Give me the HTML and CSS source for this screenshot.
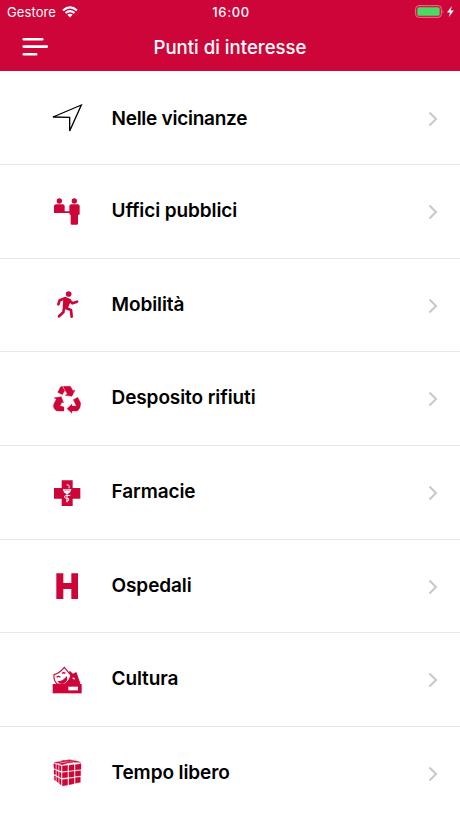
FILE: index.html
```html
<!DOCTYPE html>
<html lang="it">
  <head>
    <meta charset="utf-8">
    <title>Punti di interesse</title>
    <link rel="stylesheet" href="styles.css">
  </head>
  <body>
    <header>
      <div class="status">
        <div class="carrier">
          <span>Gestore</span>
          <svg width="16" height="12" viewBox="0 0 16 12" fill="none" stroke="#fff" stroke-width="2.1">
            <path d="M1 4.5Q8-1.6 15 4.5M3.5 7Q8 3.1 12.5 7"/>
            <path d="M5.4 8.8Q8 6.9 10.6 8.8L8 11.5z" fill="#fff" stroke="none"/>
          </svg>
        </div>
        <span class="time">16:00</span>
        <div class="power">
          <svg width="40" height="14" viewBox="0 0 40 14">
            <rect x=".7" y=".7" width="25.6" height="11.6" rx="3" fill="none" stroke="#e77d98" stroke-width="1"/>
            <rect x="2.3" y="2.3" width="22.4" height="8.4" rx="1.5" fill="#4cd964"/>
            <path d="M27.7 5q1.8 1.8 0 3.6z" fill="#e77d98"/>
            <path d="M36.8 1L32 7.4h3l-1.2 4.9 5-6.9h-3z" fill="#fff"/>
          </svg>
        </div>
      </div>
      <div class="navbar">
        <svg class="menu" width="28" height="20" viewBox="0 0 28 20" stroke="#fff" stroke-width="2.6" stroke-linecap="round">
          <path d="M2.7 2.2h18.6M2.7 9.6h23.1M2.7 17.2h12.5"/>
        </svg>
        <h1>Punti di interesse</h1>
      </div>
    </header>
    <ul class="list">
      <li class="first">
        <svg class="icon" viewBox="0 0 135 135"><path d="M109 27L24 63L74 64L74 105Z" fill="none" stroke="#000" stroke-width="4"/></svg>
        <span class="label">Nelle vicinanze</span>
        <svg class="chevron" viewBox="0 0 10 16"><path d="M1.5 1.5L8 8L1.5 14.5"/></svg>
      </li>
      <li>
        <svg class="icon" viewBox="0 0 135 135">
          <circle cx="43" cy="33" r="8"/><circle cx="88" cy="33" r="8"/>
          <path d="M27 69V49q0-6 6-6h20q6 0 6 6v15h14V49q0-6 6-6h19q6 0 6 6v22q0 4-5 4v26q0 3-4 3H81q-4 0-4-3V75q-4 0-4-6z"/>
        </svg>
        <span class="label">Uffici pubblici</span>
        <svg class="chevron" viewBox="0 0 10 16"><path d="M1.5 1.5L8 8L1.5 14.5"/></svg>
      </li>
      <li>
        <svg class="icon" viewBox="0 0 135 135">
          <circle cx="71" cy="33" r="8.5"/>
          <path d="M60 47L73 52L64 74L58 72Z" stroke="#ce0538" stroke-width="10" stroke-linejoin="round"/>
          <path d="M61 46L44 52L40 64M74 52L82 61L96 56M64 76L78 81L80 101M57 76L55 88L42 100" fill="none" stroke="#ce0538" stroke-width="8" stroke-linecap="round" stroke-linejoin="round"/>
        </svg>
        <span class="label">Mobilità</span>
        <svg class="chevron" viewBox="0 0 10 16"><path d="M1.5 1.5L8 8L1.5 14.5"/></svg>
      </li>
      <li>
        <svg class="icon recycle" viewBox="0 0 135 135">
          <path d="M55 28H76L84 41L90 39L81 58L60 55L67 51L60 40Z"/>
          <path d="M52 28L59 41L52 53L38 46L46 31Q48 28 52 28Z"/>
          <path d="M27 62L49 59L56 78L51 76L45 86L57 90V102H35Q26 97 25 88Q25 82 34 67Z"/>
          <path d="M85 68L98 61L107 78Q107 95 97 102H81V109L66 95L81 81V87H94Z"/>
        </svg>
        <span class="label">Desposito rifiuti</span>
        <svg class="chevron" viewBox="0 0 10 16"><path d="M1.5 1.5L8 8L1.5 14.5"/></svg>
      </li>
      <li>
        <svg class="icon" viewBox="0 0 135 135">
          <path d="M50 28H83V51H106V83H83V105H50V83H27V51H50Z"/>
          <path d="M54 54H79Q77 68 66 69Q55 67 54 54Z" fill="#fff"/>
          <path d="M72 52Q75 39 65 42M66 68V94M76 73Q60 72 57 77Q59 82 71 83Q75 88 64 91" fill="none" stroke="#fff" stroke-width="3"/>
          <path d="M58 57H74" stroke="#ce0538" stroke-width="2"/>
        </svg>
        <span class="label">Farmacie</span>
        <svg class="chevron" viewBox="0 0 10 16"><path d="M1.5 1.5L8 8L1.5 14.5"/></svg>
      </li>
      <li>
        <svg class="icon" viewBox="0 0 135 135"><path d="M34 28H55V57H79V28H99V105H79V75H55V105H34Z"/></svg>
        <span class="label">Ospedali</span>
        <svg class="chevron" viewBox="0 0 10 16"><path d="M1.5 1.5L8 8L1.5 14.5"/></svg>
      </li>
      <li>
        <svg class="icon" viewBox="0 0 135 135">
          <path d="M74 38L84 47L94 42L106 76L97 84H60L66 66Z"/>
          <path d="M27 50Q43 46 58 28L78 52Q73 70 60 78H36Q25 67 27 50Z" fill="#fff" stroke="#ce0538" stroke-width="3.5"/>
          <path d="M35 58Q41 52 46 58M52 47Q55 42 61 46" fill="none" stroke="#ce0538" stroke-width="4"/>
          <path d="M37 70Q55 70 65 54Q71 71 54 77Q43 79 37 70Z"/>
          <path d="M83 59L89 64" stroke="#fff" stroke-width="4"/>
          <path d="M23 78H110V106H23Z"/><path d="M70 86H99V97H70Z" fill="#fff"/>
        </svg>
        <span class="label">Cultura</span>
        <svg class="chevron" viewBox="0 0 10 16"><path d="M1.5 1.5L8 8L1.5 14.5"/></svg>
      </li>
      <li>
        <svg class="icon cube" viewBox="0 0 135 135">
          <!-- front face -->
          <path d="M52 45L68 43V59L52 61ZM72 43L87 41V57L72 59ZM91 41L108 38V55L91 57ZM52 65L68 63V79L52 81ZM72 63L87 61V77L72 79ZM91 61L107 59V74L91 76ZM52 86L68 84V102L52 105ZM72 83L87 81V98L72 101ZM91 80L106 78V94L91 97Z"/>
          <!-- left face -->
          <path d="M26 38L32 40V54L27 52ZM35 41L40 42V57L35 55ZM43 43L48 45V60L43 58ZM27 56L32 58V71L27 69ZM35 60L40 62V76L35 73ZM43 63L48 65V80L43 77ZM28 74L32 76V89L28 86ZM35 78L40 81V95L35 91ZM43 82L48 85V102L43 97Z"/>
          <!-- top face -->
          <path d="M27 35L40 32L51 34L37 37ZM44 31L57 28L69 30L55 33ZM61 28L73 26L86 28L73 30ZM41 38L55 35L66 37L52 41ZM59 34L73 31L84 34L70 36ZM77 31L90 29L107 34L89 34Z"/>
        </svg>
        <span class="label">Tempo libero</span>
        <svg class="chevron" viewBox="0 0 10 16"><path d="M1.5 1.5L8 8L1.5 14.5"/></svg>
      </li>
    </ul>
  </body>
</html>
```
FILE: styles.css
```css
*{box-sizing: border-box;}
body{
  margin: 0;
  height: 818px;
  overflow: hidden;
  background-color: #fff;
  font-family: Inter, "Liberation Sans", sans-serif;
}
svg{
  display: block;
  flex: none;
}
header{
  height: 71.4px;
  background-color: #ce0538;
  color: #fff;
}
.status{
  display: grid;
  grid-template-columns: 1fr auto 1fr;
  align-items: center;
  height: 24px;
  padding: 0 5px 0 7px;
  font-size: 13px;
}
.carrier{
  display: flex;
  align-items: center;
  gap: 6px;
  letter-spacing: 0.1px;
}
.time{
  font-weight: 500;
  letter-spacing: 0.6px;
}
.power{
  display: flex;
  justify-content: flex-end;
}
.navbar{
  display: grid;
  grid-template-columns: 50px 1fr 50px;
  align-items: center;
  height: 46px;
}
.menu{margin-left: 21px;}
h1{
  margin: 0;
  text-align: center;
  font-size: 18.6px;
  font-weight: 500;
}
.list{
  margin: 0;
  padding: 0;
  list-style: none;
}
li{
  display: flex;
  align-items: center;
  height: 93.65px;
  padding: 1.6px 22px 0 45px;
  border-bottom: 1px solid #e8e8e8;
}
.icon{
  width: 45px;
  height: 45px;
  fill: #ce0538;
}
.recycle, .cube{
  stroke: #ce0538;
  stroke-width: 1;
}
.label{
  flex: 1;
  margin-left: 21.5px;
  padding-bottom: 3px;
  color: #000;
  font-size: 19px;
  font-weight: 600;
  letter-spacing: -0.09px;
  white-space: nowrap;
}
.first .label{
  padding-bottom: 0;
  letter-spacing: -0.26px;
}
.chevron{
  width: 10px;
  height: 16px;
  fill: none;
  stroke: #c7c7cc;
  stroke-width: 2;
}
```
